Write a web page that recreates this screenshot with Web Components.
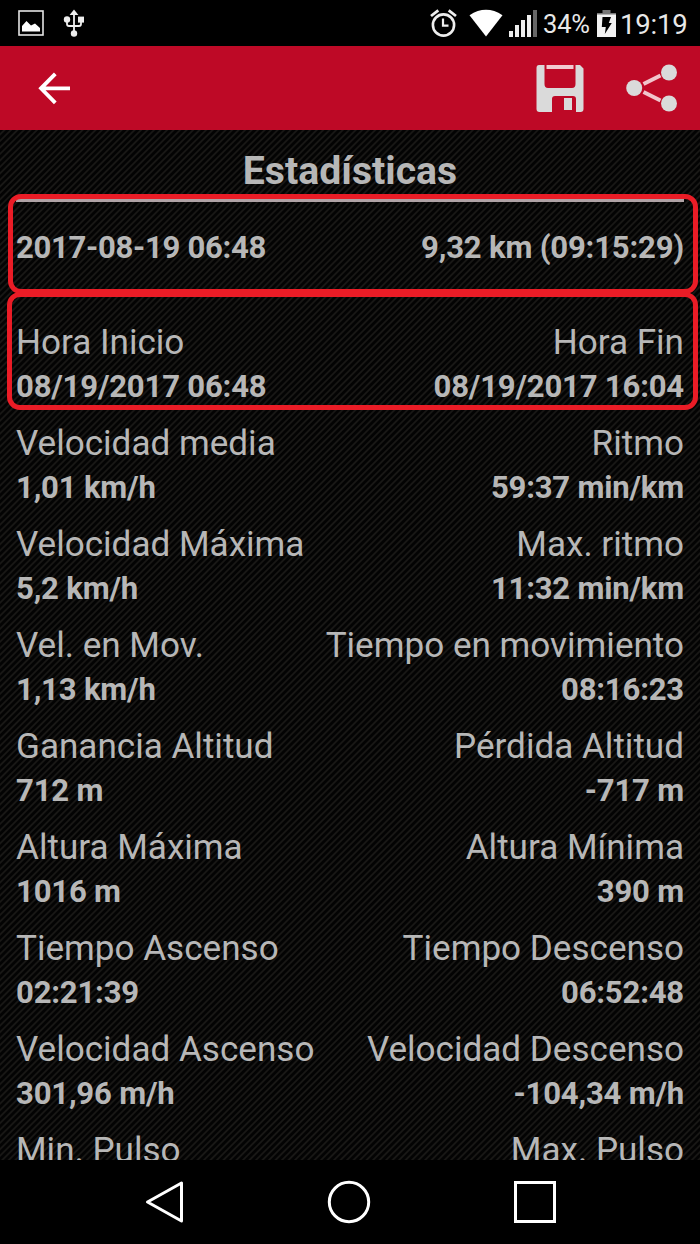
<!DOCTYPE html>
<html lang="es">
<head>
<meta charset="utf-8">
<meta name="viewport" content="width=device-width">
<title>Estadísticas</title>
<style>
    html, body {
        margin: 0;
        height: 100%;
        background: #000;
        overflow: hidden;
    }
    body {
        font-family: Roboto, "Liberation Sans", sans-serif;
        color: #b7b7b7;
    }
</style>
</head>
<body>
<phone-screen>
    <status-bar slot="status"></status-bar>
    <app-bar slot="header"></app-bar>
    <stats-page heading="Estadísticas">
        <stat-summary slot="summary">
            <span slot="start">2017-08-19 06:48</span>
            <span slot="end">9,32 km (09:15:29)</span>
        </stat-summary>
        <stat-row start="Hora Inicio" start-value="08/19/2017 06:48" end="Hora Fin" end-value="08/19/2017 16:04" marked></stat-row>
        <stat-row start="Velocidad media" start-value="1,01 km/h" end="Ritmo" end-value="59:37 min/km"></stat-row>
        <stat-row start="Velocidad Máxima" start-value="5,2 km/h" end="Max. ritmo" end-value="11:32 min/km"></stat-row>
        <stat-row start="Vel. en Mov." start-value="1,13 km/h" end="Tiempo en movimiento" end-value="08:16:23"></stat-row>
        <stat-row start="Ganancia Altitud" start-value="712 m" end="Pérdida Altitud" end-value="-717 m"></stat-row>
        <stat-row start="Altura Máxima" start-value="1016 m" end="Altura Mínima" end-value="390 m"></stat-row>
        <stat-row start="Tiempo Ascenso" start-value="02:21:39" end="Tiempo Descenso" end-value="06:52:48"></stat-row>
        <stat-row start="Velocidad Ascenso" start-value="301,96 m/h" end="Velocidad Descenso" end-value="-104,34 m/h"></stat-row>
        <stat-row start="Min. Pulso" end="Max. Pulso"></stat-row>
    </stats-page>
    <nav-bar slot="footer"></nav-bar>
</phone-screen>

<script>
class PhoneScreen extends HTMLElement {
    constructor() {
        super();
        this.attachShadow({ mode: 'open' }).innerHTML = `
            <style>
            :host {
                display: grid;
                grid-template-rows: 46px 84px minmax(0, 1fr) 84px;
                width: 700px;
                height: 1244px;
                overflow: hidden;
            }
            </style>
            <slot name="status"></slot>
            <slot name="header"></slot>
            <slot></slot>
            <slot name="footer"></slot>
        `;
    }
}

class StatusBar extends HTMLElement {
    constructor() {
        super();
        this.attachShadow({ mode: 'open' }).innerHTML = `
            <style>
            :host {
                display: flex;
                justify-content: space-between;
                box-sizing: border-box;
                padding: 0 12px 0 18px;
                background: #000;
                color: #e8e8e8;
            }
            .group {
                display: flex;
                align-items: center;
            }
            svg { display: block; }
            .notices { gap: 19px; }
            .alarm { margin-right: 12px; }
            .wifi { margin-right: 6px; }
            .signal { margin-right: 6px; }
            .percent { width: 47px; margin-right: 7px; padding-top: 2px; font-size: 25.5px; letter-spacing: -0.2px; white-space: nowrap; }
            .battery { margin-right: 4px; }
            .clock { width: 68px; padding-top: 2px; font-size: 27.5px; letter-spacing: -0.2px; white-space: nowrap; }
            </style>
            <div class="group notices">
                <svg width="26" height="28" viewBox="0 0 26 28">
                    <rect x="1" y="2" width="24" height="24" fill="none" stroke="#e4e4e4" stroke-width="1.6"/>
                    <path d="M4 22.5V17L8.5 12L13 16.5L17 14.5L22 19V22.5Z" fill="#fff"/>
                </svg>
                <svg width="22" height="28" viewBox="0 0 22 28">
                    <path d="M11 3V24M4 12V15Q4 17 6 17H16Q18 17 18 15V12" fill="none" stroke="#eee" stroke-width="1.8"/>
                    <path d="M6.6 6L11 .6L15.4 6Z" fill="#eee"/>
                    <circle cx="4" cy="10.5" r="3.2" fill="#eee"/>
                    <rect x="15" y="7.6" width="6" height="6" fill="#eee"/>
                    <circle cx="11" cy="24.5" r="3.2" fill="#eee"/>
                </svg>
            </div>
            <div class="group">
                <svg class="alarm" width="27" height="28" viewBox="0 0 27 28">
                    <circle cx="13.5" cy="16" r="10.6" fill="none" stroke="#eee" stroke-width="2.6"/>
                    <path d="M1 7L8.3 1.3M26 7L18.7 1.3" stroke="#eee" stroke-width="2.8"/>
                    <path d="M13 9.5V16.6H18.5" fill="none" stroke="#eee" stroke-width="2.2"/>
                </svg>
                <svg class="wifi" width="34" height="28" viewBox="0 0 34 28">
                    <path d="M.5 6.3Q17 -4.6 33.5 6.3L17 27.5Z" fill="#fff"/>
                </svg>
                <svg class="signal" width="28" height="28" viewBox="0 0 28 28">
                    <path d="M0 22h4v6H0zM6 16h4v12H6zM12 11h4v17h-4zM18 6h4v22h-4z" fill="#eee"/>
                    <path d="M24 1h4v27h-4z" fill="#666"/>
                </svg>
                <span class="percent">34%</span>
                <svg class="battery" width="19" height="28" viewBox="0 0 19 28">
                    <path d="M5.5 1h8v3H19v2H0V4h5.5z" fill="#777"/>
                    <path d="M0 5.5h19V28H0z" fill="#f2f2f2"/>
                    <path d="M5.5 8H14L11.8 14H14.8L7.8 25L8.8 18H4.8Z" fill="#000"/>
                </svg>
                <span class="clock">19:19</span>
            </div>
        `;
    }
}

class AppBar extends HTMLElement {
    constructor() {
        super();
        this.attachShadow({ mode: 'open' }).innerHTML = `
            <style>
            :host {
                display: flex;
                align-items: center;
                box-sizing: border-box;
                padding: 0 22px 0 38px;
                background: #be0926;
            }
            svg { display: block; }
            .back { margin-right: auto; }
            .save { margin-right: 42px; }
            </style>
            <svg class="back" width="34" height="34" viewBox="0 0 34 34">
                <path d="M32 17.3H3M17.3 2.8L3 17.3L17.3 31.8" fill="none" stroke="#fff" stroke-width="3.8"/>
            </svg>
            <svg class="save" width="48" height="48" viewBox="0 0 48 48">
                <path d="M3 1H8.5V20Q8.5 24 12 24H36Q39.5 24 39.5 20V1H44L47.5 4.500V45Q47.5 48 44.5 48H40V35Q40 32 37 32H19Q16 32 16 35V48H3.5Q.5 48 .5 45V4Q.5 1 3 1Z" fill="#dadada"/>
                <path d="M10.5 1H37.5V5H10.5Z" fill="#f1cbd1"/>
                <path d="M28 34H36V46H28Z" fill="#dadada"/>
            </svg>
            <svg width="52" height="48" viewBox="0 0 52 48">
                <path d="M17.5 20L34.5 11.5M17.5 28L34.5 36.5" stroke="#f1c5cc" stroke-width="4"/>
                <circle cx="8.2" cy="24" r="8" fill="#dadada"/>
                <circle cx="43" cy="8.5" r="8" fill="#dadada"/>
                <circle cx="43" cy="39.5" r="8" fill="#dadada"/>
            </svg>
        `;
    }
}

class StatsPage extends HTMLElement {
    constructor() {
        super();
        this.attachShadow({ mode: 'open' }).innerHTML = `
            <style>
            :host {
                display: block;
                box-sizing: border-box;
                overflow: hidden;
                padding: 14px 16px 0;
                background: repeating-linear-gradient(135deg, #030303 0, #030303 1.7px, #191816 2.8px, #191816 3.5px, #030303 4.6px);
            }
            h1 {
                margin: 0;
                height: 55px;
                font-size: 39.2px;
                line-height: 54px;
                text-align: center;
                border-bottom: 3px solid #b0a3a6;
            }
            .rows {
                display: flex;
                flex-direction: column;
                gap: 11.1px;
                padding-top: 49.2px;
            }
            </style>
            <h1></h1>
            <slot name="summary"></slot>
            <div class="rows"><slot></slot></div>
        `;
    }

    connectedCallback() {
        this.shadowRoot.querySelector('h1').textContent = this.getAttribute('heading');
    }
}

class StatSummary extends HTMLElement {
    constructor() {
        super();
        this.attachShadow({ mode: 'open' }).innerHTML = `
            <style>
            :host {
                position: relative;
                display: flex;
                justify-content: space-between;
                padding-top: 24.5px;
                font-size: 31.1px;
                font-weight: 700;
                line-height: 42px;
                letter-spacing: -0.32px;
            }
            ::slotted([slot="end"]) {
                letter-spacing: -0.2px;
            }
            /* highlight frame, runs past the text column on both sides */
            .frame {
                position: absolute;
                top: -8px;
                left: -8px;
                right: -14px;
                height: 90px;
                border: 5px solid #ea1c26;
                border-radius: 13px;
            }
            </style>
            <slot name="start"></slot>
            <slot name="end"></slot>
            <div class="frame"></div>
        `;
    }
}

class StatRow extends HTMLElement {
    constructor() {
        super();
        this.attachShadow({ mode: 'open' });
    }

    connectedCallback() {
        this.shadowRoot.innerHTML = `
            <style>
            :host {
                position: relative;
                display: grid;
                grid-template-columns: auto auto;
                grid-template-rows: 48px 42px;
                justify-content: space-between;
                white-space: nowrap;
            }
            .label {
                font-size: 35.1px;
                line-height: 49px;
            }
            .value {
                font-size: 31.1px;
                font-weight: 700;
                line-height: 41px;
                letter-spacing: -0.2px;
            }
            .end { text-align: right; }
            .frame {
                position: absolute;
                top: -26px;
                left: -9px;
                right: -14px;
                height: 108px;
                border: 5px solid #ea1c26;
                border-radius: 13px;
            }
            </style>
            ${this.cell('label', 'start')}
            ${this.cell('label end', 'end')}
            ${this.cell('value', 'start-value')}
            ${this.cell('value end', 'end-value')}
            ${this.hasAttribute('marked') ? `<div class="frame"></div>` : ``}
        `;
    }

    cell(className, attribute) {
        return `<span class="${className}">${this.getAttribute(attribute) || ''}</span>`;
    }
}

class NavBar extends HTMLElement {
    constructor() {
        super();
        this.attachShadow({ mode: 'open' }).innerHTML = `
            <style>
            :host {
                display: flex;
                align-items: center;
                justify-content: space-between;
                box-sizing: border-box;
                padding: 0 143px 0 145px;
                background: #000;
            }
            svg { display: block; fill: none; stroke: #fff; stroke-width: 3; }
            </style>
            <svg width="39" height="44" viewBox="0 0 39 44">
                <path d="M36.5 3V41L2.5 22Z" stroke-linejoin="round"/>
            </svg>
            <svg width="44" height="44" viewBox="0 0 44 44">
                <circle cx="22" cy="22" r="19.7"/>
            </svg>
            <svg width="44" height="44" viewBox="0 0 44 44">
                <rect x="2.5" y="2.5" width="39" height="39"/>
            </svg>
        `;
    }
}

window.customElements.define('phone-screen', PhoneScreen);
window.customElements.define('status-bar', StatusBar);
window.customElements.define('app-bar', AppBar);
window.customElements.define('stats-page', StatsPage);
window.customElements.define('stat-summary', StatSummary);
window.customElements.define('stat-row', StatRow);
window.customElements.define('nav-bar', NavBar);
</script>
</body>
</html>
